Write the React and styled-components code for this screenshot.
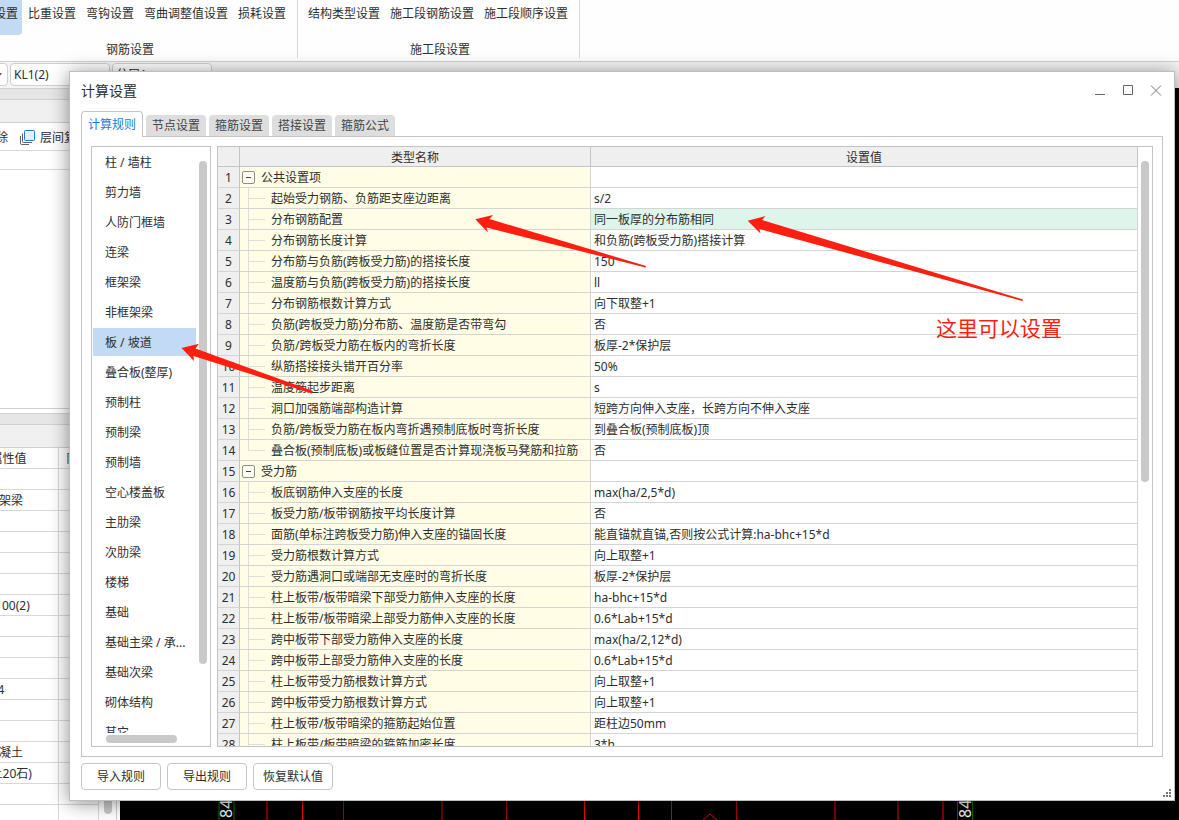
import { useState } from "react";
import styled, { createGlobalStyle, css } from "styled-components";

const GlobalStyle = createGlobalStyle`
  * {
    box-sizing: border-box;
  }
  body {
    margin: 0;
    overflow: hidden;
    background: #f0f0f0;
    color: #2e2e2e;
    font: 12px/20px "Noto Sans", "Noto Sans CJK SC", sans-serif;
  }
  button, select {
    font: inherit;
    color: inherit;
  }
`;

const Screen = styled.div`
  position: relative;
  display: flex;
  flex-direction: column;
  height: 100vh;
  overflow: hidden;
`;

/* ---------- main window ---------- */

const Ribbon = styled.header`
  display: flex;
  flex: none;
  height: 62px;
  margin-left: -40px;
  background: #fefefe;
  border-bottom: 1px solid #d0d0d0;
`;

const RibbonGroup = styled.section`
  display: flex;
  flex-direction: column;
  height: 58px;
  padding: 0 7px 0 6px;
  border-right: 1px solid #d8d8d8;
`;

const RibbonItems = styled.div`
  display: flex;
  gap: 2px;
  height: 35px;
`;

const RibbonItem = styled.button`
  display: flex;
  height: 35px;
  padding: 4px 4px 0;
  border: 0;
  border-radius: 0 0 4px 4px;
  background: ${(p) => (p.$active ? "#c2daf3" : "transparent")};
  white-space: nowrap;
`;

const GroupLabel = styled.div`
  padding: 5px 0 0 4px;
  text-align: center;
`;

const OptionBar = styled.div`
  display: flex;
  flex: none;
  gap: 2px;
  height: 26px;
  padding-top: 1px;
  margin-left: -90px;
  background: #f4f4f4;
`;

const Combo = styled.select`
  width: 100px;
  height: 23px;
  padding: 0 3px;
  appearance: none;
  background: #fff;
  border: 1px solid #cfcfcf;
  border-radius: 4px;
`;

const ComboWrap = styled.label`
  display: flex;
  position: relative;

  &::after {
    content: "";
    position: absolute;
    top: 10px;
    right: 6px;
    border: 3px solid transparent;
    border-top: 4px solid #555;
  }
`;

const Workspace = styled.div`
  display: flex;
  flex: 1;
  min-height: 0;
`;

const SidePane = styled.aside`
  display: flex;
  flex: none;
  flex-direction: column;
  width: 120px;
  overflow: hidden;
  background: #fff;
`;

const Splitter = styled.div`
  flex: none;
  height: 12px;
  background: #e6e6e6;
  border: solid #d0d0d0;
  border-width: 1px 0;
`;

const PaneHeader = styled.div`
  flex: none;
  height: 23px;
  background: #f0f0f0;
  border-bottom: 1px solid #d0d0d0;
`;

const PaneTools = styled.div`
  display: flex;
  flex: none;
  align-items: center;
  gap: 11px;
  height: 28px;
  padding-top: 2px;
  margin-left: -16px;
  border-bottom: 1px solid #d8d8d8;
`;

const PaneTool = styled.button`
  display: flex;
  flex: none;
  align-items: center;
  gap: 5px;
  padding: 0;
  border: 0;
  background: none;
`;

const SearchStrip = styled.div`
  flex: none;
  height: 19px;
  border-bottom: 1px solid #d8d8d8;
`;

const ComponentTree = styled.div`
  flex: none;
  height: 239px;
  margin-bottom: 4px;
  border-bottom: 1px solid #d0d0d0;
`;

const PropertyArea = styled.div`
  display: flex;
  flex: 1;
  min-height: 0;
`;

const PropertyTable = styled.table`
  flex: none;
  width: 140px;
  margin-left: -41px;
  border-spacing: 0;
  table-layout: fixed;

  th, td {
    height: 21px;
    padding: 2px 4px 0;
    font-weight: 400;
    line-height: 18px;
    white-space: nowrap;
    overflow: hidden;
    border: solid #d8d8d8;
    border-width: 0 1px 1px 0;
  }
`;

const PropertyScroll = styled.div`
  display: flex;
  flex-direction: column;
  justify-content: flex-end;
  width: 18px;
  padding: 0 4px 6px 5px;
  border-right: 1px solid #d0d0d0;
`;

const Canvas = styled.svg`
  flex: 1;
  height: 100%;
  min-width: 0;
  background: #000;
`;

/* ---------- dialog ---------- */

const Dialog = styled.div`
  position: absolute;
  inset: 71px 4px 19px 69px;
  display: flex;
  flex-direction: column;
  padding: 0 11px 10px;
  background: #fff;
  border: 1px solid #bcbfc0;
  box-shadow: 0 2px 18px rgba(0, 0, 0, 0.45);
`;

const TitleBar = styled.div`
  display: flex;
  flex: none;
  align-items: center;
  justify-content: space-between;
  height: 39px;
  padding-bottom: 2px;
`;

const Title = styled.h1`
  margin: 0;
  font-size: 14px;
  font-weight: 400;
`;

const WindowButtons = styled.div`
  display: flex;
  gap: 12px;
  margin-right: -1px;
`;

const WindowButton = styled.button`
  display: flex;
  padding: 0;
  border: 0;
  background: none;
`;

const Tabs = styled.div`
  display: flex;
  flex: none;
  align-items: flex-end;
  gap: 3px;
  height: 26px;
  margin-bottom: -1px;
`;

const Tab = styled.button`
  height: 21px;
  padding: 0 6px;
  margin-bottom: 1px;
  border: 0;
  border-radius: 4px 4px 0 0;
  background: #dedede;
  color: #444;

  ${(p) =>
    p.$active &&
    css`
      z-index: 1;
      height: 26px;
      margin-bottom: 0;
      border: 1px solid #c2c5c8;
      border-bottom: 0;
      background: #fff;
      color: #1f7ae0;
    `}
`;

const Panel = styled.div`
  display: flex;
  flex: 1;
  gap: 6px;
  min-height: 0;
  padding: 9px;
  border: 1px solid #c2c5c8;
`;

const Sidebar = styled.nav`
  display: grid;
  flex: none;
  grid-template: minmax(0, 1fr) 13px / 104px 14px;
  width: 120px;
  border: 1px solid #c2c5c8;
`;

const Categories = styled.ul`
  display: flex;
  flex-direction: column;
  gap: 2px;
  margin: 0;
  padding: 1px 0 0 1px;
  overflow: hidden;
  list-style: none;
`;

const Category = styled.button`
  display: block;
  width: 100%;
  height: 28px;
  padding: 2px 0 0 12px;
  border: 0;
  background: ${(p) => (p.$active ? "#c2daf3" : "transparent")};
  text-align: left;
  white-space: nowrap;
`;

const Track = styled.div`
  display: flex;
  justify-content: ${(p) => (p.$wide ? "flex-start" : "center")};
  padding: ${(p) => p.$pad};
`;

const Thumb = styled.div`
  width: ${(p) => p.$w}px;
  height: ${(p) => p.$h};
  border-radius: 4px;
  background: #c9c9c9;
`;

const GridFrame = styled.div`
  display: flex;
  flex: 1;
  min-width: 0;
  border: 1px solid #c2c5c8;
`;

const GridView = styled.div`
  flex: 1;
  min-width: 0;
  overflow: hidden;
`;

const RuleTable = styled.table`
  width: 100%;
  border-spacing: 0;
  table-layout: fixed;

  th, td {
    height: 21px;
    padding: 2px 0 0;
    font-weight: 400;
    line-height: 18px;
    white-space: nowrap;
    border: solid #d4d4d4;
    border-width: 0 1px 1px 0;
  }
  thead th {
    height: 20px;
    line-height: 17px;
    background: #efefef;
    border-color: #c2c5c8;
  }
  tbody th {
    background: #efefef;
    border-right-color: #c2c5c8;
  }
`;

const NameCell = styled.td`
  && {
    padding: 0;
    background: #fffde5;
  }
`;

const NameInner = styled.div`
  display: flex;
  align-items: center;
  gap: 6px;
  height: 20px;
  padding-left: ${(p) => (p.$group ? 2 : 8)}px;
`;

const RuleName = styled.span`
  padding-top: 2px;
`;

const Branch = styled.span`
  width: 17px;
  height: 20px;
  background:
    linear-gradient(#dedede, #dedede) 0 0 / 1px ${(p) => (p.$last ? "11px" : "100%")} no-repeat,
    linear-gradient(#dedede, #dedede) 0 10px / 100% 1px no-repeat;
`;

const Toggle = styled.button`
  display: flex;
  align-items: center;
  justify-content: center;
  width: 13px;
  height: 13px;
  padding: 0;
  border: 1px solid #8c8c8c;
  border-radius: 2px;
  background: #fffef2;

  &::before {
    content: "";
    width: 5px;
    height: 1px;
    background: #444;
  }
`;

const ValueCell = styled.td`
  && {
    padding-left: 3px;
    background: ${(p) => (p.$selected ? "#ddf5eb" : "#fff")};
  }
`;

const Footer = styled.footer`
  display: flex;
  flex: none;
  gap: 6px;
  padding-top: 6px;
`;

const FooterButton = styled.button`
  width: 80px;
  height: 27px;
  padding: 0;
  border: 1px solid #c6c6c6;
  border-radius: 4px;
  background: #fff;
`;

const Grip = styled.svg`
  position: absolute;
  right: 3px;
  bottom: 3px;
`;

/* ---------- notes drawn over the window ---------- */

const Arrows = styled.svg`
  position: absolute;
  inset: 0;
  width: 100%;
  height: 100%;
  pointer-events: none;
`;

const Note = styled.p`
  position: absolute;
  top: 313px;
  left: 936px;
  margin: 0;
  color: #ff1f10;
  font-size: 21px;
  line-height: 30px;
`;

const ribbonGroups = [
  {
    label: "钢筋设置",
    items: ["计算设置", "比重设置", "弯钩设置", "弯曲调整值设置", "损耗设置"],
  },
  {
    label: "施工段设置",
    items: ["结构类型设置", "施工段钢筋设置", "施工段顺序设置"],
  },
];

const properties = [
  "", "楼层框架梁", "", "", "", "", "C10@100(2)", "", "", "", "4C25; 4",
  "", "", "现浇混凝土", "(混凝土20石)", "", "", "",
];

const tabs = ["计算规则", "节点设置", "箍筋设置", "搭接设置", "箍筋公式"];

const categories = [
  "柱 / 墙柱", "剪力墙", "人防门框墙", "连梁", "框架梁", "非框架梁",
  "板 / 坡道", "叠合板(整厚)", "预制柱", "预制梁", "预制墙", "空心楼盖板",
  "主肋梁", "次肋梁", "楼梯", "基础", "基础主梁 / 承...", "基础次梁",
  "砌体结构", "其它",
];

const rules = [
  { name: "公共设置项", group: true },
  { name: "起始受力钢筋、负筋距支座边距离", value: "s/2" },
  { name: "分布钢筋配置", value: "同一板厚的分布筋相同" },
  { name: "分布钢筋长度计算", value: "和负筋(跨板受力筋)搭接计算" },
  { name: "分布筋与负筋(跨板受力筋)的搭接长度", value: "150" },
  { name: "温度筋与负筋(跨板受力筋)的搭接长度", value: "ll" },
  { name: "分布钢筋根数计算方式", value: "向下取整+1" },
  { name: "负筋(跨板受力筋)分布筋、温度筋是否带弯勾", value: "否" },
  { name: "负筋/跨板受力筋在板内的弯折长度", value: "板厚-2*保护层" },
  { name: "纵筋搭接接头错开百分率", value: "50%" },
  { name: "温度筋起步距离", value: "s" },
  { name: "洞口加强筋端部构造计算", value: "短跨方向伸入支座，长跨方向不伸入支座" },
  { name: "负筋/跨板受力筋在板内弯折遇预制底板时弯折长度", value: "到叠合板(预制底板)顶" },
  { name: "叠合板(预制底板)或板缝位置是否计算现浇板马凳筋和拉筋", value: "否", last: true },
  { name: "受力筋", group: true },
  { name: "板底钢筋伸入支座的长度", value: "max(ha/2,5*d)" },
  { name: "板受力筋/板带钢筋按平均长度计算", value: "否" },
  { name: "面筋(单标注跨板受力筋)伸入支座的锚固长度", value: "能直锚就直锚,否则按公式计算:ha-bhc+15*d" },
  { name: "受力筋根数计算方式", value: "向上取整+1" },
  { name: "受力筋遇洞口或端部无支座时的弯折长度", value: "板厚-2*保护层" },
  { name: "柱上板带/板带暗梁下部受力筋伸入支座的长度", value: "ha-bhc+15*d" },
  { name: "柱上板带/板带暗梁上部受力筋伸入支座的长度", value: "0.6*Lab+15*d" },
  { name: "跨中板带下部受力筋伸入支座的长度", value: "max(ha/2,12*d)" },
  { name: "跨中板带上部受力筋伸入支座的长度", value: "0.6*Lab+15*d" },
  { name: "柱上板带受力筋根数计算方式", value: "向上取整+1" },
  { name: "跨中板带受力筋根数计算方式", value: "向上取整+1" },
  { name: "柱上板带/板带暗梁的箍筋起始位置", value: "距柱边50mm" },
  { name: "柱上板带/板带暗梁的箍筋加密长度", value: "3*h" },
];

// [x, width, colour] of the axis and beam lines on the drawing canvas
const canvasLines = [
  [98, 2, "#003c00"],
  [113, 2, "#003c00"],
  [146, 2, "#7d0000"],
  [182, 1, "#ff0000"],
  [223, 1, "#b00000"],
  [321, 2, "#700000"],
  [386, 1, "#b00000"],
  [464, 1, "#ff0000"],
  [518, 1, "#ff0000"],
  [551, 1, "#d00000"],
  [616, 1, "#b80000"],
  [714, 2, "#7d0000"],
  [777, 2, "#7d0000"],
  [822, 2, "#7d0000"],
  [837, 1, "#006400"],
  [852, 1, "#006400"],
];

function MainWindow() {
  return (
    <>
      <Ribbon>
        {ribbonGroups.map((group) => (
          <RibbonGroup key={group.label}>
            <RibbonItems>
              {group.items.map((item) => (
                <RibbonItem key={item} $active={item === "计算设置"}>
                  {item}
                </RibbonItem>
              ))}
            </RibbonItems>
            <GroupLabel>{group.label}</GroupLabel>
          </RibbonGroup>
        ))}
      </Ribbon>
      <OptionBar>
        <ComboWrap>
          <Combo aria-label="构件类型" defaultValue="梁" style={{ width: 98 }}>
            <option>梁</option>
          </Combo>
        </ComboWrap>
        <ComboWrap>
          <Combo aria-label="构件名称">
            <option>KL1(2)</option>
          </Combo>
        </ComboWrap>
        <ComboWrap>
          <Combo aria-label="分层">
            <option>分层1</option>
          </Combo>
        </ComboWrap>
      </OptionBar>
      <Workspace>
        <SidePane>
          <Splitter />
          <PaneHeader />
          <PaneTools>
            <PaneTool>删除</PaneTool>
            <PaneTool>
              <svg width="16" height="16" viewBox="0 0 16 16" fill="none">
                <rect x="5.5" y="0.5" width="10" height="10" rx="1" fill="#e3effc" stroke="#1f78dc" />
                <path d="M3.500 3.500v8q0 1 1 1H13M1.500 6v7.500q0 1 1 1H10" stroke="#5a6470" />
              </svg>
              层间复制
            </PaneTool>
          </PaneTools>
          <SearchStrip />
          <ComponentTree />
          <Splitter />
          <PaneHeader />
          <PropertyArea>
            <PropertyTable>
              <colgroup>
                <col style={{ width: 100 }} />
                <col />
              </colgroup>
              <thead>
                <tr>
                  <th>属性值</th>
                  <th>附加</th>
                </tr>
              </thead>
              <tbody>
                {properties.map((value, i) => (
                  <tr key={i}>
                    <td>{value}</td>
                    <td />
                  </tr>
                ))}
              </tbody>
            </PropertyTable>
            <PropertyScroll>
              <Thumb $w={8} $h="80px" />
            </PropertyScroll>
          </PropertyArea>
        </SidePane>
        <Canvas>
          {canvasLines.map(([x, width, color]) => (
            <rect key={x} x={x} y="0" width={width} height="100%" fill={color} />
          ))}
          <path d="M583 732l7-6 7 6" fill="none" stroke="#d00000" />
          <g fill="#f0f0f0" fontSize="16">
            <text transform="translate(112 730) rotate(-90)">84</text>
            <text transform="translate(851 730) rotate(-90)">84</text>
          </g>
        </Canvas>
      </Workspace>
    </>
  );
}

function RuleGrid() {
  return (
    <GridFrame>
      <GridView>
        <RuleTable>
          <colgroup>
            <col style={{ width: 22 }} />
            <col style={{ width: 351 }} />
            <col />
          </colgroup>
          <thead>
            <tr>
              <th />
              <th>类型名称</th>
              <th>设置值</th>
            </tr>
          </thead>
          <tbody>
            {rules.map((rule, i) => (
              <tr key={rule.name}>
                <th>{i + 1}</th>
                <NameCell>
                  <NameInner $group={rule.group}>
                    {rule.group ? (
                      <Toggle aria-label="折叠" />
                    ) : (
                      <Branch $last={rule.last} />
                    )}
                    <RuleName>{rule.name}</RuleName>
                  </NameInner>
                </NameCell>
                <ValueCell $selected={i === 2}>{rule.value}</ValueCell>
              </tr>
            ))}
          </tbody>
        </RuleTable>
      </GridView>
      <Track $pad="14px 3px 0">
        <Thumb $w={8} $h="321px" />
      </Track>
    </GridFrame>
  );
}

function SettingsDialog() {
  const [tab, setTab] = useState("计算规则");
  const [category, setCategory] = useState("板 / 坡道");

  return (
    <Dialog role="dialog" aria-label="计算设置">
      <TitleBar>
        <Title>计算设置</Title>
        <WindowButtons>
          <WindowButton aria-label="最小化">
            <svg width="16" height="16" stroke="#666">
              <path d="M3 11.500h10" />
            </svg>
          </WindowButton>
          <WindowButton aria-label="最大化">
            <svg width="16" height="16" stroke="#666" fill="none">
              <path d="M3.500 2.500h9v9h-9z" />
            </svg>
          </WindowButton>
          <WindowButton aria-label="关闭">
            <svg width="16" height="16" stroke="#777">
              <path d="M3 2.500l10 10M13 2.500l-10 10" />
            </svg>
          </WindowButton>
        </WindowButtons>
      </TitleBar>
      <Tabs role="tablist">
        {tabs.map((name) => (
          <Tab
            key={name}
            role="tab"
            aria-selected={name === tab}
            $active={name === tab}
            onClick={() => setTab(name)}
          >
            {name}
          </Tab>
        ))}
      </Tabs>
      <Panel>
        <Sidebar>
          <Categories>
            {categories.map((name) => (
              <li key={name}>
                <Category
                  $active={name === category}
                  onClick={() => setCategory(name)}
                >
                  {name}
                </Category>
              </li>
            ))}
          </Categories>
          <Track $pad="14px 3px 0">
            <Thumb $w={8} $h="503px" />
          </Track>
          <Track $wide $pad="2px 0 3px 14px">
            <Thumb $w={71} $h="8px" />
          </Track>
        </Sidebar>
        <RuleGrid />
      </Panel>
      <Footer>
        <FooterButton>导入规则</FooterButton>
        <FooterButton>导出规则</FooterButton>
        <FooterButton>恢复默认值</FooterButton>
      </Footer>
      <Grip width="8" height="8" fill="#6b7480">
        <path d="M6 0h2v2h-2zM3 3h2v2h-2zM6 3h2v2h-2zM0 6h2v2h-2zM3 6h2v2h-2zM6 6h2v2h-2z" />
      </Grip>
    </Dialog>
  );
}

export default function App() {
  return (
    <Screen>
      <GlobalStyle />
      <MainWindow />
      <SettingsDialog />
      <Arrows fill="#ff1f10">
        <path d="M181.500 348L199 343.700 195.500 348.500 313 391 312 393.500 193.500 356 194 361z" />
        <path d="M475.300 219.300L493 215 489.500 219 646 266 645.500 267.500 486.500 227.500 488 232.500z" />
        <path d="M747.700 220.700L765.500 216 762 220 1023 299.500 1022.500 301 759.500 229 760.500 233.500z" />
      </Arrows>
      <Note>这里可以设置</Note>
    </Screen>
  );
}
